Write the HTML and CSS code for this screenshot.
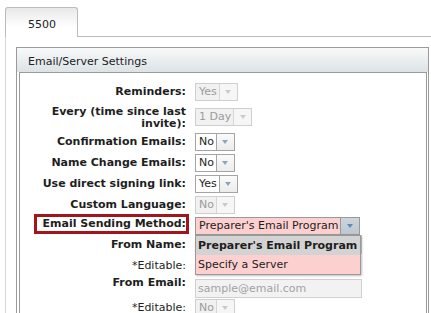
FILE: index.html
```html
<!DOCTYPE html>
<html>
<head>
<meta charset="utf-8">
<link rel="stylesheet" href="styles.css">
</head>
<body>
<div class="tabs">
  <div class="tabstrip"><div class="tab">5500</div></div>
  <div class="tabbody">
    <div class="panel">
      <div class="panel-head">Email/Server Settings</div>
      <div class="panel-body">
        <div class="row">
          <div class="label">Reminders:</div>
          <div class="ctl"><span class="sel dis"><span class="sel-text">Yes</span><span class="sel-btn"><i class="tri"></i></span></span></div>
        </div>
        <div class="row tall">
          <div class="label">Every (time since last invite):</div>
          <div class="ctl"><span class="sel dis"><span class="sel-text">1 Day</span><span class="sel-btn"><i class="tri"></i></span></span></div>
        </div>
        <div class="row">
          <div class="label">Confirmation Emails:</div>
          <div class="ctl"><span class="sel"><span class="sel-text">No</span><span class="sel-btn"><i class="tri"></i></span></span></div>
        </div>
        <div class="row">
          <div class="label">Name Change Emails:</div>
          <div class="ctl"><span class="sel"><span class="sel-text">No</span><span class="sel-btn"><i class="tri"></i></span></span></div>
        </div>
        <div class="row">
          <div class="label">Use direct signing link:</div>
          <div class="ctl"><span class="sel"><span class="sel-text">Yes</span><span class="sel-btn"><i class="tri"></i></span></span></div>
        </div>
        <div class="row">
          <div class="label">Custom Language:</div>
          <div class="ctl"><span class="sel dis"><span class="sel-text">No</span><span class="sel-btn"><i class="tri"></i></span></span></div>
        </div>
        <div class="row hl">
          <div class="label"><span class="flag">Email Sending Method:</span></div>
          <div class="ctl">
            <span class="sel open"><span class="sel-text">Preparer's Email Program</span><span class="sel-btn"><i class="tri"></i></span></span>
            <div class="dd">
              <div class="opt cur">Preparer's Email Program</div>
              <div class="opt">Specify a Server</div>
            </div>
          </div>
        </div>
        <div class="row">
          <div class="label">From Name:</div>
          <div class="ctl"><div class="inp">&nbsp;</div></div>
        </div>
        <div class="row">
          <div class="label plain">*Editable:</div>
          <div class="ctl"><span class="sel dis"><span class="sel-text">No</span><span class="sel-btn"><i class="tri"></i></span></span></div>
        </div>
        <div class="row email">
          <div class="label">From Email:</div>
          <div class="ctl"><div class="inp">sample@email.com</div></div>
        </div>
        <div class="row">
          <div class="label plain">*Editable:</div>
          <div class="ctl"><span class="sel dis"><span class="sel-text">No</span><span class="sel-btn"><i class="tri"></i></span></span></div>
        </div>
      </div>
    </div>
  </div>
</div>
</body>
</html>
```
FILE: styles.css
```css
html, body {
  margin: 0;
  padding: 0;
  background: #fff;
}
body {
  font-family: "DejaVu Sans", Verdana, sans-serif;
  font-size: 11px;
  color: #222;
  width: 431px;
  height: 313px;
  overflow: hidden;
}
.tabs {
  padding: 7px 0 0 5px;
}
.tabstrip {
  display: flex;
  position: relative;
  z-index: 1;
}
.tab {
  width: 73px;
  height: 30px;
  margin-bottom: -1px;
  box-sizing: border-box;
  border: 1px solid #bbb;
  border-bottom: none;
  border-radius: 3px 3px 0 0;
  background: linear-gradient(#e8e8e8, #fff 65%);
  padding: 10px 0 0 22px;
  line-height: 14px;
  color: #222;
}
.tabbody {
  border-top: 1px solid #bbb;
  border-left: 1px solid #d6d6d6;
  padding: 10px 0 0 10px;
  height: 300px;
}
.panel {
  width: 413px;
  box-sizing: border-box;
  border: 1px solid #9a9a9a;
  background: #fff;
}
.panel-head {
  height: 24px;
  box-sizing: border-box;
  padding: 3px 0 0 11px;
  line-height: 21px;
  background: linear-gradient(#f8f9f9, #dce3e6);
  color: #222;
}
.panel-body {
  margin: 0 1px 0 2px;
  border: 1px solid #9a9a9a;
  background: #fff;
  padding-top: 8px;
  height: 260px;
}
.row {
  display: grid;
  grid-template-columns: 166px max-content;
  column-gap: 9px;
  align-items: center;
  height: 21px;
}
.row.tall {
  height: 29px;
  align-items: start;
}
.row.tall .label {
  line-height: 12px;
  padding-top: 4px;
}
.row.tall .ctl {
  align-self: center;
}
.row.hl {
  height: 19px;
  align-items: start;
}
.row.hl .sel {
  margin-top: 2px;
}
.row.email {
  align-items: start;
}
.row.email .inp {
  margin-top: 3px;
}
.label {
  text-align: right;
  font-weight: bold;
  line-height: 14px;
  color: #1e1e1e;
}
.label.plain {
  font-weight: normal;
}
.flag {
  display: inline-block;
  margin-top: 2px;
  padding-left: 6px;
  line-height: 14px;
  outline: 3px solid #a3141b;
}
.ctl {
  position: relative;
  display: flex;
}
.sel {
  display: inline-flex;
  height: 18px;
  box-sizing: border-box;
  border: 1px solid #a4a4a4;
  background: #fff;
  color: #1e1e1e;
}
.sel-text {
  padding: 0 2px 0 3px;
  line-height: 16px;
  white-space: nowrap;
}
.sel-btn {
  width: 17px;
  border-left: 1px solid #a4a4a4;
  background: linear-gradient(#fafafa, #ececec);
  display: flex;
  align-items: center;
  justify-content: center;
}
.tri {
  display: block;
  width: 0;
  height: 0;
  border-left: 3px solid transparent;
  border-right: 3px solid transparent;
  border-top: 4px solid #8fa4ba;
}
.sel.dis {
  border-color: #cfcfcf;
  background: #f1f1f1;
  color: #9c9c9c;
}
.sel.dis .sel-btn {
  border-left-color: #d6d6d6;
  background: #f6f6f6;
}
.sel.dis .tri {
  border-top-color: #c6cbd0;
}
.sel.open {
  border-color: #999;
  background: #fdd0d0;
}
.sel.open .sel-btn {
  width: 18px;
  border-left-color: #999;
  background: linear-gradient(#ccd5dc, #bcc7d0);
}
.sel.open .tri {
  border-top-color: #5d8bb8;
}
.dd {
  position: absolute;
  left: 0;
  top: 100%;
  width: 166px;
  box-sizing: border-box;
  border: 1px solid #999;
  background: #fdd0d0;
  box-shadow: 1px 1px 2px rgba(0, 0, 0, 0.25);
  z-index: 2;
}
.opt {
  line-height: 19px;
  padding-left: 2px;
  white-space: nowrap;
  color: #1e1e1e;
}
.opt.cur {
  background: #d3d3d3;
  font-weight: bold;
}
.inp {
  width: 167px;
  height: 19px;
  box-sizing: border-box;
  border: 1px solid #d0d0d0;
  background: #f2f2f2;
  color: #a2a2a2;
  padding-left: 2px;
  line-height: 17px;
}
```
